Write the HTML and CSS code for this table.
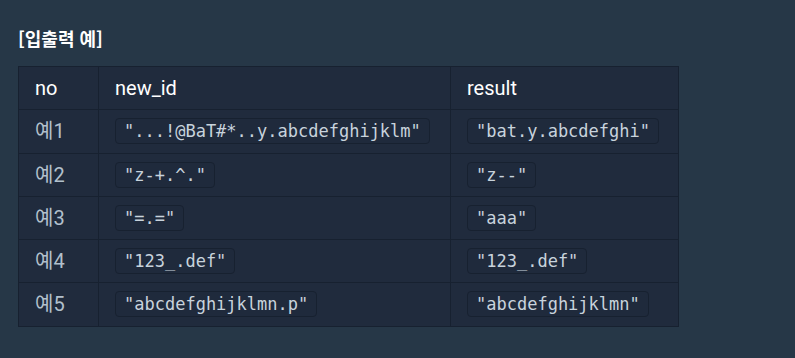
FILE: index.html
```html
<!DOCTYPE html>
<html lang="ko">
<head>
<meta charset="utf-8">
<link rel="stylesheet" href="styles.css">
</head>
<body>
<div class="page">
  <h5 class="title">[입출력 예]</h5>
  <table class="examples">
    <colgroup>
      <col class="c-no">
      <col class="c-id">
      <col class="c-res">
    </colgroup>
    <thead>
      <tr><th>no</th><th>new_id</th><th>result</th></tr>
    </thead>
    <tbody>
      <tr><td>예1</td><td><code>"...!@BaT#*..y.abcdefghijklm"</code></td><td><code>"bat.y.abcdefghi"</code></td></tr>
      <tr><td>예2</td><td><code>"z-+.^."</code></td><td><code>"z--"</code></td></tr>
      <tr><td>예3</td><td><code>"=.="</code></td><td><code>"aaa"</code></td></tr>
      <tr><td>예4</td><td><code>"123_.def"</code></td><td><code>"123_.def"</code></td></tr>
      <tr><td>예5</td><td><code>"abcdefghijklmn.p"</code></td><td><code>"abcdefghijklmn"</code></td></tr>
    </tbody>
  </table>
</div>
</body>
</html>
```
FILE: styles.css
```css
html, body {
  margin: 0;
  padding: 0;
  background: #263747;
}
.page {
  padding: 26px 18px 0 18px;
  font-family: Roboto, "Noto Sans CJK KR", sans-serif;
  color: #b2c0cc;
}
.title {
  margin: 0 0 16px 0;
  font-family: "Noto Sans CJK KR", sans-serif;
  font-size: 18px;
  line-height: 24px;
  font-weight: 700;
  color: #ffffff;
}
.examples {
  width: 660px;
  border-collapse: collapse;
  table-layout: fixed;
  background: #202b3d;
  border: 1px solid #172130;
  font-size: 20px;
}
.c-no { width: 80px; }
.c-id { width: 352px; }
.c-res { width: 228px; }
.examples th,
.examples td {
  border: 1px solid #172130;
  padding: 8px 16px;
  height: 26.3px;
  line-height: 26.3px;
  text-align: left;
  vertical-align: middle;
}
.examples th {
  font-weight: 400;
  color: #ffffff;
}
.examples code {
  display: inline-block;
  vertical-align: top;
  font-family: "DejaVu Sans Mono", monospace;
  font-size: 17px;
  line-height: 20px;
  padding: 2px 8px;
  border: 1px solid #172130;
  border-radius: 4px;
  background: #1f2a3c;
  color: #c8d3dc;
}
```
